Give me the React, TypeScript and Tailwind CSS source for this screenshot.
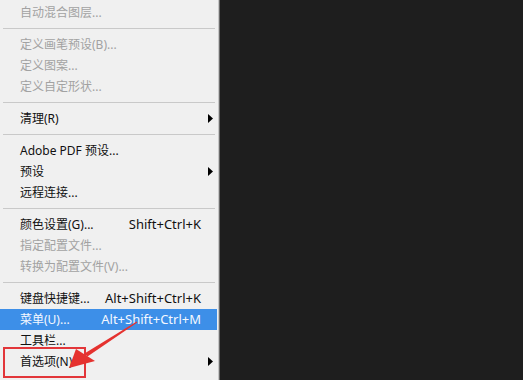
import React from "react";

type Item =
  | { sep: true }
  | { sep?: false; label: string; shortcut?: string; disabled?: boolean; sub?: boolean; active?: boolean };

const items: Item[] = [
  { label: "自动混合图层...", disabled: true },
  { sep: true },
  { label: "定义画笔预设(B)...", disabled: true },
  { label: "定义图案...", disabled: true },
  { label: "定义自定形状...", disabled: true },
  { sep: true },
  { label: "清理(R)", sub: true },
  { sep: true },
  { label: "Adobe PDF 预设..." },
  { label: "预设", sub: true },
  { label: "远程连接..." },
  { sep: true },
  { label: "颜色设置(G)...", shortcut: "Shift+Ctrl+K" },
  { label: "指定配置文件...", disabled: true },
  { label: "转换为配置文件(V)...", disabled: true },
  { sep: true },
  { label: "键盘快捷键...", shortcut: "Alt+Shift+Ctrl+K" },
  { label: "菜单(U)...", shortcut: "Alt+Shift+Ctrl+M", active: true },
  { label: "工具栏..." },
  { label: "首选项(N)", sub: true },
];

function Row({ item }: { item: Exclude<Item, { sep: true }> }) {
  const color = item.active ? "text-[#f4f8ff]" : item.disabled ? "text-[#a2a2a2]" : "text-[#111111]";
  return (
    <div
      className={`flex items-center h-[21px] pl-[20px] mr-[1px] ${item.active ? "bg-[#3d8fe8]" : ""} ${color}`}
    >
      <span className="flex-1 text-[12px] leading-[21px] whitespace-nowrap">{item.label}</span>
      {item.shortcut && (
        <span className="text-[13px] leading-[21px] whitespace-nowrap">{item.shortcut}</span>
      )}
      <span className="w-[16px] flex items-center">
        {item.sub && (
          <svg width="5" height="9" viewBox="0 0 5 9" className="ml-[7px]">
            <polygon points="0,0 5,4.5 0,9" fill="#000" />
          </svg>
        )}
      </span>
    </div>
  );
}

export default function App() {
  return (
    <div
      className="relative w-[523px] h-[380px] overflow-hidden bg-[#1e1e1e] flex"
      style={{ fontFamily: '"Noto Sans", "Noto Sans CJK SC", sans-serif' }}
    >
      <div className="w-[218px] h-full bg-[#f0f0f0] pt-[2px] flex flex-col">
        {items.map((it, i) =>
          it.sep ? (
            <div key={i} className="h-[11px] flex items-center">
              <div className="mx-[3px] flex-1 h-[1px] bg-[#c9c9c9]" />
            </div>
          ) : (
            <Row key={i} item={it} />
          )
        )}
      </div>
      <div className="w-[1px] h-full bg-[#c6c6c6]" />
      <div className="w-[1px] h-full bg-[#6a6a6a]" />

      <div className="absolute left-[3px] top-[347px] w-[83px] h-[31px] border-[2.5px] border-[#e2363a]" />
      <svg className="absolute left-0 top-0" width="523" height="380" viewBox="0 0 523 380">
        <polygon points="137.3,322.4 136.7,321.6 84.9,353.3 87.1,356.7" fill="#e5322f" />
        <polygon points="69,368 76,349 95,361" fill="#e5322f" />
      </svg>
    </div>
  );
}
